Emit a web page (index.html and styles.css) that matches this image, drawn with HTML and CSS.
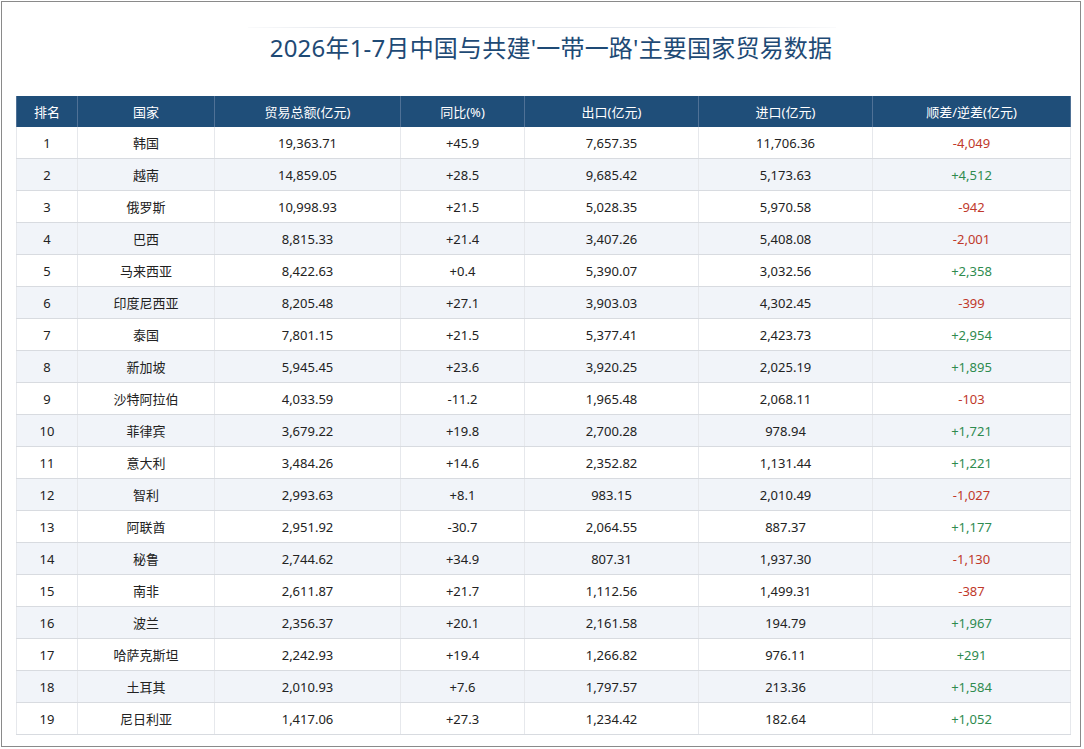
FILE: index.html
```html
<!DOCTYPE html>
<html lang="zh">
<head>
<meta charset="utf-8">
<title>贸易数据</title>
<link rel="stylesheet" href="styles.css">
</head>
<body>
<div class="frame">
  <h1 class="title">2026年1-7月中国与共建'一带一路'主要国家贸易数据</h1>
  <table class="data">
    <colgroup>
      <col class="c1"><col class="c2"><col class="c3"><col class="c4"><col class="c5"><col class="c6"><col class="c7">
    </colgroup>
    <thead>
      <tr><th>排名</th><th>国家</th><th>贸易总额(亿元)</th><th>同比(%)</th><th>出口(亿元)</th><th>进口(亿元)</th><th>顺差/逆差(亿元)</th></tr>
    </thead>
    <tbody>
      <tr><td>1</td><td>韩国</td><td>19,363.71</td><td>+45.9</td><td>7,657.35</td><td>11,706.36</td><td class="neg">-4,049</td></tr>
      <tr><td>2</td><td>越南</td><td>14,859.05</td><td>+28.5</td><td>9,685.42</td><td>5,173.63</td><td class="pos">+4,512</td></tr>
      <tr><td>3</td><td>俄罗斯</td><td>10,998.93</td><td>+21.5</td><td>5,028.35</td><td>5,970.58</td><td class="neg">-942</td></tr>
      <tr><td>4</td><td>巴西</td><td>8,815.33</td><td>+21.4</td><td>3,407.26</td><td>5,408.08</td><td class="neg">-2,001</td></tr>
      <tr><td>5</td><td>马来西亚</td><td>8,422.63</td><td>+0.4</td><td>5,390.07</td><td>3,032.56</td><td class="pos">+2,358</td></tr>
      <tr><td>6</td><td>印度尼西亚</td><td>8,205.48</td><td>+27.1</td><td>3,903.03</td><td>4,302.45</td><td class="neg">-399</td></tr>
      <tr><td>7</td><td>泰国</td><td>7,801.15</td><td>+21.5</td><td>5,377.41</td><td>2,423.73</td><td class="pos">+2,954</td></tr>
      <tr><td>8</td><td>新加坡</td><td>5,945.45</td><td>+23.6</td><td>3,920.25</td><td>2,025.19</td><td class="pos">+1,895</td></tr>
      <tr><td>9</td><td>沙特阿拉伯</td><td>4,033.59</td><td>-11.2</td><td>1,965.48</td><td>2,068.11</td><td class="neg">-103</td></tr>
      <tr><td>10</td><td>菲律宾</td><td>3,679.22</td><td>+19.8</td><td>2,700.28</td><td>978.94</td><td class="pos">+1,721</td></tr>
      <tr><td>11</td><td>意大利</td><td>3,484.26</td><td>+14.6</td><td>2,352.82</td><td>1,131.44</td><td class="pos">+1,221</td></tr>
      <tr><td>12</td><td>智利</td><td>2,993.63</td><td>+8.1</td><td>983.15</td><td>2,010.49</td><td class="neg">-1,027</td></tr>
      <tr><td>13</td><td>阿联酋</td><td>2,951.92</td><td>-30.7</td><td>2,064.55</td><td>887.37</td><td class="pos">+1,177</td></tr>
      <tr><td>14</td><td>秘鲁</td><td>2,744.62</td><td>+34.9</td><td>807.31</td><td>1,937.30</td><td class="neg">-1,130</td></tr>
      <tr><td>15</td><td>南非</td><td>2,611.87</td><td>+21.7</td><td>1,112.56</td><td>1,499.31</td><td class="neg">-387</td></tr>
      <tr><td>16</td><td>波兰</td><td>2,356.37</td><td>+20.1</td><td>2,161.58</td><td>194.79</td><td class="pos">+1,967</td></tr>
      <tr><td>17</td><td>哈萨克斯坦</td><td>2,242.93</td><td>+19.4</td><td>1,266.82</td><td>976.11</td><td class="pos">+291</td></tr>
      <tr><td>18</td><td>土耳其</td><td>2,010.93</td><td>+7.6</td><td>1,797.57</td><td>213.36</td><td class="pos">+1,584</td></tr>
      <tr><td>19</td><td>尼日利亚</td><td>1,417.06</td><td>+27.3</td><td>1,234.42</td><td>182.64</td><td class="pos">+1,052</td></tr>
    </tbody>
  </table>
</div>
</body>
</html>
```

FILE: styles.css
```css
html, body {
  margin: 0;
  padding: 0;
  background: #ffffff;
}
body {
  font-family: "Noto Sans", "Noto Sans CJK SC", sans-serif;
  color: #222;
}
.frame {
  box-sizing: border-box;
  margin: 1px 0 0 1px;
  width: 1080px;
  height: 746px;
  border: 1px solid #8a8a8a;
  padding: 25px 0 0 14px;
}
.title {
  box-sizing: border-box;
  width: 588px;
  margin: 0 0 33px 232px;
  padding: 5px 0 0 18px;
  font-size: 24px;
  line-height: 31px;
  letter-spacing: 0.2px;
  font-weight: 400;
  color: #1e4a75;
  text-align: center;
  white-space: nowrap;
  background: linear-gradient(to right, rgba(230,233,238,0.2), #e6e9ee 15%, #e6e9ee 85%, rgba(230,233,238,0.2)) top / 100% 1px no-repeat;
}
.data {
  width: 1054px;
  border-collapse: collapse;
  table-layout: fixed;
  font-size: 13px;
}
.c1 { width: 61px; }
.c2 { width: 137px; }
.c3 { width: 186px; }
.c4 { width: 124px; }
.c5 { width: 174px; }
.c6 { width: 174px; }
.c7 { width: 198px; }
.data th {
  background: #1f4e79;
  color: #ffffff;
  font-weight: 400;
  height: 31px;
  padding: 0;
  text-align: center;
  border-left: 1px solid #4f7196;
  border-right: 1px solid #4f7196;
}
.data td {
  height: 31px;
  padding: 0;
  text-align: center;
  border-bottom: 1px solid #d8dbe0;
  border-left: 1px solid #e6e8ec;
  border-right: 1px solid #e6e8ec;
  color: #222;
}
.data tbody tr:nth-child(even) td {
  background: #f1f4f9;
}
.data td.neg { color: #c0392b; }
.data td.pos { color: #2e8b4f; }
```
